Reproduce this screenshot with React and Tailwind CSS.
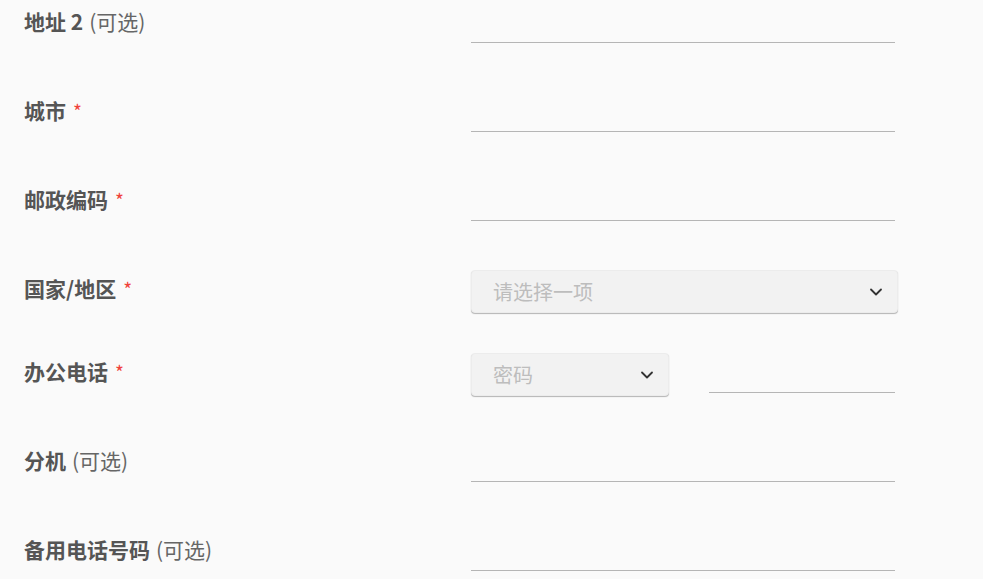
import { ChevronDown } from "lucide-react"

const font = { fontFamily: '"Noto Sans CJK SC", "Noto Sans", sans-serif' }

function Label({ text, required, optional }) {
  return (
    <div className="w-[471px] shrink-0 pl-6 text-[21px] leading-[27px] font-bold text-[#555555]">
      {text}
      {optional && <span className="ml-[6px] font-normal text-[21px] text-[#666666]">(可选)</span>}
      {required && <span className="ml-[7px] text-[19px] font-normal text-[#f0433a]">*</span>}
    </div>
  )
}

function Line({ width = "w-[424px]" }) {
  return <div className={`${width} h-[35px] border-b border-[#b5b5b5]`} />
}

function Select({ placeholder, width }) {
  return (
    <div
      className={`${width} -mt-[5px] h-[43px] flex items-center justify-between pl-[21px] pr-[11px] bg-[#f2f2f2] rounded-[4px] border border-[#ececec] shadow-[0_1px_1px_rgba(0,0,0,0.28)]`}
    >
      <span className="text-[20px] text-[#bdbdbd]">{placeholder}</span>
      <ChevronDown className="w-[20px] h-[20px] text-[#333333]" strokeWidth={2.2} />
    </div>
  )
}

export default function App() {
  return (
    <div className="min-h-screen bg-[#fafafa] pt-[8px]" style={font}>
      <div className="flex h-[89px]">
        <Label text="地址 2" optional />
        <Line />
      </div>
      <div className="flex h-[89px]">
        <Label text="城市" required />
        <Line />
      </div>
      <div className="flex h-[89px]">
        <Label text="邮政编码" required />
        <Line />
      </div>
      <div className="flex h-[83px]">
        <Label text="国家/地区" required />
        <Select placeholder="请选择一项" width="w-[427px]" />
      </div>
      <div className="flex h-[89px]">
        <Label text="办公电话" required />
        <div className="flex items-start gap-[40px]">
          <Select placeholder="密码" width="w-[198px]" />
          <Line width="w-[186px]" />
        </div>
      </div>
      <div className="flex h-[89px]">
        <Label text="分机" optional />
        <Line />
      </div>
      <div className="flex h-[89px]">
        <Label text="备用电话号码" optional />
        <Line />
      </div>
    </div>
  )
}
